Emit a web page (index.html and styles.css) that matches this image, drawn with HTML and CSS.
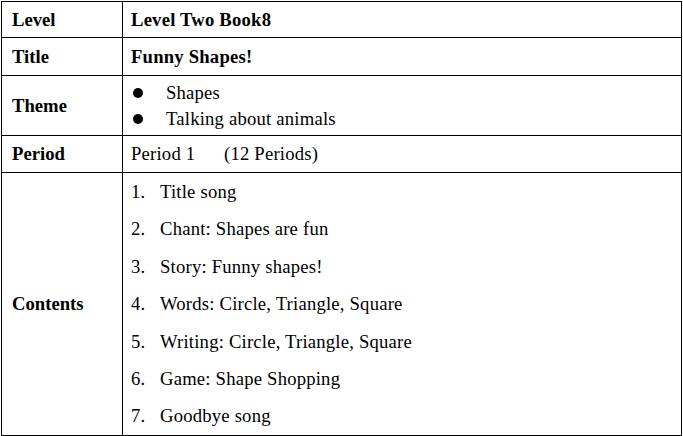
FILE: index.html
```html
<!DOCTYPE html>
<html>
<head>
<meta charset="utf-8">
<link rel="stylesheet" href="styles.css">
</head>
<body>
<table class="plan">
  <tr class="r1">
    <th class="label">Level</th>
    <td class="strong">Level Two Book8</td>
  </tr>
  <tr class="r2">
    <th class="label">Title</th>
    <td class="strong">Funny Shapes!</td>
  </tr>
  <tr class="r3">
    <th class="label">Theme</th>
    <td>
      <ul class="bullets">
        <li><span class="dot"></span>Shapes</li>
        <li><span class="dot"></span>Talking about animals</li>
      </ul>
    </td>
  </tr>
  <tr class="r4">
    <th class="label">Period</th>
    <td><span class="period">Period 1</span>(12 Periods)</td>
  </tr>
  <tr class="r5">
    <th class="label">Contents</th>
    <td>
      <ol class="items">
        <li><span class="num">1.</span>Title song</li>
        <li><span class="num">2.</span>Chant: Shapes are fun</li>
        <li><span class="num">3.</span>Story: Funny shapes!</li>
        <li><span class="num">4.</span>Words: Circle, Triangle, Square</li>
        <li><span class="num">5.</span>Writing: Circle, Triangle, Square</li>
        <li><span class="num">6.</span>Game: Shape Shopping</li>
        <li><span class="num">7.</span>Goodbye song</li>
      </ol>
    </td>
  </tr>
</table>
</body>
</html>
```

FILE: styles.css
```css
html, body {
  margin: 0;
  padding: 0;
  background: #fff;
}
body {
  font-family: "Liberation Serif", "Times New Roman", serif;
  font-size: 18.67px;
  color: #000;
}
.plan {
  border-collapse: collapse;
  margin: 1px 0 0 1px;
  width: 681px;
  table-layout: fixed;
}
.plan th, .plan td {
  border: 1px solid #000;
  padding: 0 0 0 8px;
  vertical-align: middle;
  text-align: left;
}
.plan td {
  letter-spacing: 0.2px;
}
.plan th {
  width: 110px;
  font-weight: bold;
  padding-left: 10px;
}
.strong { font-weight: bold; }
.r1 { height: 36px; }
.r2 { height: 38px; }
.r3 { height: 60px; }
.r4 { height: 37px; }
.r5 { height: 262px; }
.bullets, .items {
  list-style: none;
  margin: 0;
  padding: 0;
}
.bullets li {
  line-height: 26px;
  display: flex;
  align-items: center;
}
.dot {
  width: 10px;
  height: 10px;
  border-radius: 50%;
  background: #000;
  margin: 0 23px 0 2px;
}
.period {
  display: inline-block;
  width: 93px;
}
.items li {
  line-height: 37.4px;
}
.num {
  display: inline-block;
  width: 29px;
}
```
